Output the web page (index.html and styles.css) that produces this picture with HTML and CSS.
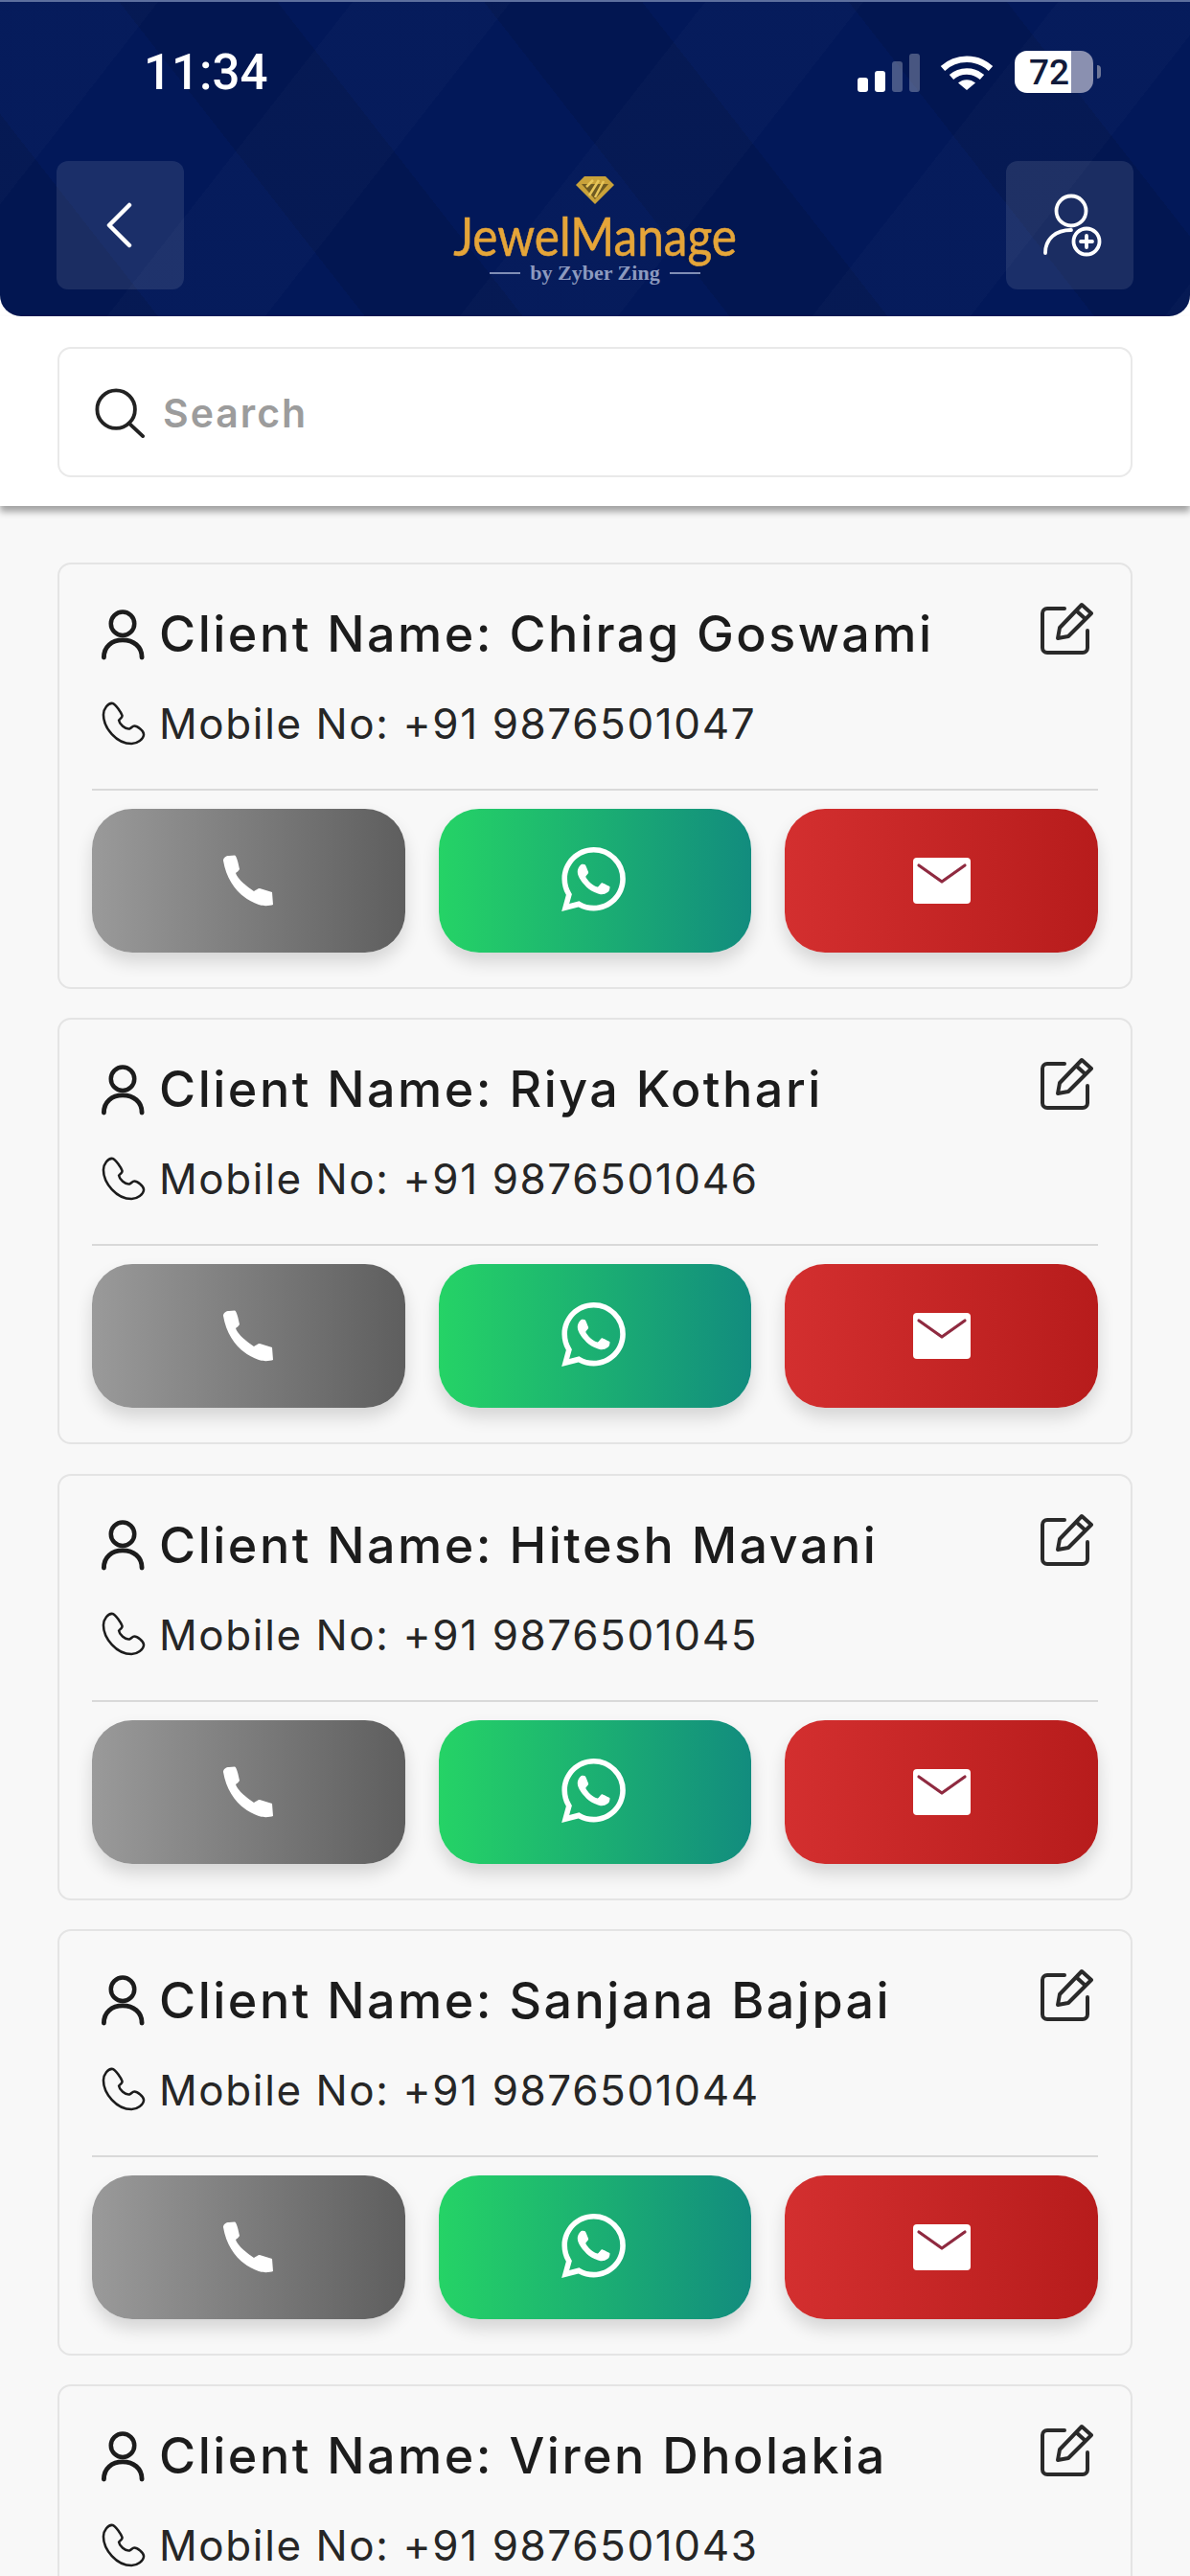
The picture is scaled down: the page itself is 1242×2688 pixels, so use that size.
FILE: index.html
```html
<!DOCTYPE html>
<html lang="en">

<head>
  <meta charset="UTF-8">
  <meta name="viewport" content="width=device-width, initial-scale=1.0">
  <title>JewelManage - Clients</title>
  <link rel="stylesheet" href="styles.css">
</head>

<body>
  <svg class="sprites" aria-hidden="true">
    <symbol id="i-user" viewBox="0 0 48 54">
      <circle cx="23.5" cy="15" r="12.5" fill="none" stroke="currentColor" stroke-width="4.6" />
      <path d="M3.5 51C3.5 39.500 12 32.500 23.500 32.500S44 39.500 44 51" fill="none" stroke="currentColor" stroke-width="5" stroke-linecap="round" />
    </symbol>
    <symbol id="i-handset" viewBox="0 0 48 48">
      <path d="M3 14C3 8 8 1 13 2C16 3 22 12 23 15C23.500 17 20 19 19.500 20C20 24 26 30 31 29C33 28 34 26 36 26C39 26 46 31 46 35C46 40 39 45 33 45C17 45 3 28 3 14Z" fill="none" stroke="currentColor" stroke-width="2.6" stroke-linejoin="round" />
    </symbol>
    <symbol id="i-edit" viewBox="0 0 56 56">
      <path d="M26 7H8A5 5 0 0 0 3 12V48A5 5 0 0 0 8 53H45A5 5 0 0 0 50 48V30" fill="none" stroke="currentColor" stroke-width="4" stroke-linecap="round" />
      <path d="M19 38L21 27L44 3L54 12L30 36Z" fill="none" stroke="currentColor" stroke-width="4" stroke-linejoin="round" />
      <path d="M38 9L48 18" fill="none" stroke="currentColor" stroke-width="4" />
    </symbol>
    <symbol id="i-call" viewBox="0 0 54 54">
      <path d="M1 6C1 3 4 1 7 1L13 .5C15 1 17 10 18 15C17 17 15 18 14 19C16 25 25 33 33 38C35 37 37 35 39 35L52 39L53 52C50 53 44 54 38 52C20 46 5 30 1 6Z" fill="#fff" />
    </symbol>
    <symbol id="i-whatsapp" viewBox="0 0 24 24">
      <path fill="#fff" d="M17.472 14.382c-.297-.149-1.758-.867-2.03-.967-.273-.099-.471-.148-.67.15-.197.297-.767.966-.94 1.164-.173.199-.347.223-.644.075-.297-.15-1.255-.463-2.39-1.475-.883-.788-1.48-1.761-1.653-2.059-.173-.297-.018-.458.13-.606.134-.133.298-.347.446-.52.149-.174.198-.298.298-.497.099-.198.05-.371-.025-.52-.075-.149-.669-1.612-.916-2.207-.242-.579-.487-.5-.669-.51-.173-.008-.371-.01-.57-.01-.198 0-.52.074-.792.372-.272.297-1.04 1.016-1.04 2.479 0 1.462 1.065 2.875 1.213 3.074.149.198 2.096 3.2 5.077 4.487.709.306 1.262.489 1.694.625.712.227 1.36.195 1.871.118.571-.085 1.758-.719 2.006-1.413.248-.694.248-1.289.173-1.413-.074-.124-.272-.198-.57-.347m-5.421 7.403h-.004a9.87 9.87 0 01-5.031-1.378l-.361-.214-3.741.982.998-3.648-.235-.374a9.86 9.86 0 01-1.51-5.26c.001-5.45 4.436-9.884 9.888-9.884 2.64 0 5.122 1.03 6.988 2.898a9.825 9.825 0 012.893 6.994c-.003 5.45-4.437 9.884-9.885 9.884m8.413-18.297A11.815 11.815 0 0012.05 0C5.495 0 .16 5.335.157 11.892c0 2.096.547 4.142 1.588 5.945L.057 24l6.305-1.654a11.882 11.882 0 005.683 1.448h.005c6.554 0 11.89-5.335 11.893-11.893a11.821 11.821 0 00-3.48-8.413z" />
    </symbol>
    <symbol id="i-mail" viewBox="0 0 60 48">
      <rect width="60" height="48" rx="4" fill="#fff" />
      <path d="M6 8L30 25L54 8" fill="none" stroke="#8f2a40" stroke-width="3.2" stroke-linecap="round" stroke-linejoin="round" />
    </symbol>
  </svg>

  <header class="top">
    <div class="status">
      <span class="time">11:34</span>
      <div class="status-icons">
        <span class="signal"><i></i><i></i><i class="off"></i><i class="off"></i></span>
        <svg class="wifi" viewBox="0 0 56 36">
          <path d="M3 13.500C17 .5 39 .5 53 13.500" fill="none" stroke="#fff" stroke-width="6.500" />
          <path d="M12 22.500C21 14.500 35 14.500 44 22.500" fill="none" stroke="#fff" stroke-width="6.500" />
          <path d="M19 28.500C24 24 32 24 37 28.500L28 36Z" fill="#fff" />
        </svg>
        <span class="battery"><b>72</b></span>
        <span class="battery-nub"></span>
      </div>
    </div>
    <nav class="bar">
      <button class="bar-btn" aria-label="Back">
        <svg class="back-icon" width="30" height="50" viewBox="0 0 30 50">
          <path d="M26 4L5 25L26 46" fill="none" stroke="#fff" stroke-width="4.500" stroke-linecap="round" stroke-linejoin="round" />
        </svg>
      </button>
      <div class="logo">
        <svg class="logo-gem" width="40" height="30" viewBox="0 0 40 30">
          <path d="M9 1H31L40 10L20 30L0 10Z" fill="#c9a23a" />
          <path d="M6 9H34L20 25Z" fill="#6e5a22" />
          <path d="M14 21L24 5M20 23L29 6M11 12L18 5" fill="none" stroke="#e8c65a" stroke-width="2.500" />
        </svg>
        <span class="logo-name">JewelManage</span>
        <span class="logo-sub"><i></i>by Zyber Zing<i></i></span>
      </div>
      <button class="bar-btn" aria-label="Add client">
        <svg class="add-icon" width="62" height="66" viewBox="0 0 62 66">
          <circle cx="29" cy="18" r="15.500" fill="none" stroke="#fff" stroke-width="3.800" />
          <path d="M2 62C2 47 13 38 29 38" fill="none" stroke="#fff" stroke-width="3.800" stroke-linecap="round" />
          <circle cx="45" cy="50" r="13.500" fill="none" stroke="#fff" stroke-width="3.800" />
          <path d="M45 44V56M39 50H51" fill="none" stroke="#fff" stroke-width="3.800" stroke-linecap="round" />
        </svg>
      </button>
    </nav>
  </header>

  <section class="search-panel">
    <label class="search">
      <svg width="52" height="52" viewBox="0 0 54 54">
        <circle cx="23" cy="23" r="20.500" fill="none" stroke="#222" stroke-width="4" />
        <path d="M37 38L52 52" fill="none" stroke="#222" stroke-width="4" stroke-linecap="round" />
      </svg>
      <input class="search-input" type="text" placeholder="Search">
    </label>
  </section>

  <main class="list">
    <article class="card">
      <div class="name-row">
        <svg class="row-icon"><use href="#i-user" /></svg>
        <h2 class="name">Client Name: Chirag Goswami</h2>
        <svg class="edit"><use href="#i-edit" /></svg>
      </div>
      <div class="phone-row">
        <svg class="row-icon"><use href="#i-handset" /></svg>
        <span class="phone">Mobile No: +91 9876501047</span>
      </div>
      <div class="actions">
        <a class="action action-call"><svg class="ico-call"><use href="#i-call" /></svg></a>
        <a class="action action-wa"><svg class="ico-wa"><use href="#i-whatsapp" /></svg></a>
        <a class="action action-mail"><svg class="ico-mail"><use href="#i-mail" /></svg></a>
      </div>
    </article>

    <article class="card">
      <div class="name-row">
        <svg class="row-icon"><use href="#i-user" /></svg>
        <h2 class="name">Client Name: Riya Kothari</h2>
        <svg class="edit"><use href="#i-edit" /></svg>
      </div>
      <div class="phone-row">
        <svg class="row-icon"><use href="#i-handset" /></svg>
        <span class="phone">Mobile No: +91 9876501046</span>
      </div>
      <div class="actions">
        <a class="action action-call"><svg class="ico-call"><use href="#i-call" /></svg></a>
        <a class="action action-wa"><svg class="ico-wa"><use href="#i-whatsapp" /></svg></a>
        <a class="action action-mail"><svg class="ico-mail"><use href="#i-mail" /></svg></a>
      </div>
    </article>

    <article class="card">
      <div class="name-row">
        <svg class="row-icon"><use href="#i-user" /></svg>
        <h2 class="name">Client Name: Hitesh Mavani</h2>
        <svg class="edit"><use href="#i-edit" /></svg>
      </div>
      <div class="phone-row">
        <svg class="row-icon"><use href="#i-handset" /></svg>
        <span class="phone">Mobile No: +91 9876501045</span>
      </div>
      <div class="actions">
        <a class="action action-call"><svg class="ico-call"><use href="#i-call" /></svg></a>
        <a class="action action-wa"><svg class="ico-wa"><use href="#i-whatsapp" /></svg></a>
        <a class="action action-mail"><svg class="ico-mail"><use href="#i-mail" /></svg></a>
      </div>
    </article>

    <article class="card">
      <div class="name-row">
        <svg class="row-icon"><use href="#i-user" /></svg>
        <h2 class="name">Client Name: Sanjana Bajpai</h2>
        <svg class="edit"><use href="#i-edit" /></svg>
      </div>
      <div class="phone-row">
        <svg class="row-icon"><use href="#i-handset" /></svg>
        <span class="phone">Mobile No: +91 9876501044</span>
      </div>
      <div class="actions">
        <a class="action action-call"><svg class="ico-call"><use href="#i-call" /></svg></a>
        <a class="action action-wa"><svg class="ico-wa"><use href="#i-whatsapp" /></svg></a>
        <a class="action action-mail"><svg class="ico-mail"><use href="#i-mail" /></svg></a>
      </div>
    </article>

    <article class="card">
      <div class="name-row">
        <svg class="row-icon"><use href="#i-user" /></svg>
        <h2 class="name">Client Name: Viren Dholakia</h2>
        <svg class="edit"><use href="#i-edit" /></svg>
      </div>
      <div class="phone-row">
        <svg class="row-icon"><use href="#i-handset" /></svg>
        <span class="phone">Mobile No: +91 9876501043</span>
      </div>
    </article>
  </main>
</body>

</html>
```

FILE: styles.css
```css
* {
  box-sizing: border-box;
}

html,
body {
  height: 2688px;
  margin: 0;
  overflow: hidden;
}

body {
  display: flex;
  flex-direction: column;
  background: #fff;
  color: #1c1c1c;
  font-family: Inter, "Noto Sans", sans-serif;
}

.sprites {
  display: none;
}

/* header */
.top {
  height: 330px;
  padding: 51px 59px 0;
  flex: none;
  border-top: 2px solid #5d6f9e;
  border-radius: 0 0 22px 22px;
  background-color: #021859;
  background-image:
    repeating-linear-gradient(128deg, rgba(255, 255, 255, .014) 0 130px, transparent 130px 290px),
    repeating-linear-gradient(52deg, rgba(0, 0, 0, .09) 0 130px, transparent 130px 300px);
}

.status {
  height: 44px;
  display: flex;
  align-items: center;
  justify-content: space-between;
  padding: 0 34px 0 91px;
  color: #fff;
}

.time {
  font-size: 51px;
  font-weight: 500;
  font-family: Roboto, Inter, sans-serif;
}

.status-icons {
  display: flex;
  align-items: center;
}

.signal {
  display: flex;
  align-items: flex-end;
  gap: 7px;
  height: 40px;
  margin-top: 2px;
}

.signal i {
  width: 11px;
  border-radius: 3px;
  background: #fff;
}

.signal i:nth-child(1) { height: 15px; }
.signal i:nth-child(2) { height: 22px; }
.signal i:nth-child(3) { height: 32px; }
.signal i:nth-child(4) { height: 40px; }

.signal i.off {
  background: rgba(255, 255, 255, .28);
}

.wifi {
  width: 56px;
  height: 36px;
  margin: 2px 22px 0 21px;
}

.battery {
  width: 82px;
  height: 44px;
  display: flex;
  align-items: center;
  justify-content: center;
  padding-right: 10px;
  border-radius: 13px;
  background: linear-gradient(90deg, #fff 0 72%, #8a90b0 72%);
  color: #111a3a;
  font-family: Roboto, sans-serif;
  font-size: 37px;
}

.battery b {
  font-weight: 500;
}

.battery-nub {
  width: 4px;
  height: 14px;
  margin-left: 4px;
  border-radius: 0 4px 4px 0;
  background: #6d7697;
}

.bar {
  height: 134px;
  margin-top: 71px;
  display: flex;
  align-items: center;
  justify-content: space-between;
}

.bar-btn {
  width: 133px;
  height: 134px;
  display: flex;
  align-items: center;
  justify-content: center;
  padding: 0;
  border: 0;
  border-radius: 12px;
  background: rgba(255, 255, 255, .1);
}

.back-icon {
  margin-right: 3px;
}

.add-icon {
  margin-left: 6px;
}

.logo {
  width: 330px;
  display: flex;
  flex-direction: column;
  align-items: center;
  padding-top: 8px;
}

.logo-gem {
  margin-bottom: 6px;
}

.logo-name {
  color: #e5a539;
  font-family: Lato, sans-serif;
  font-size: 56px;
  line-height: 54px;
  -webkit-text-stroke: .6px #e5a539;
  transform: scaleX(.885);
}

.logo-sub {
  display: flex;
  align-items: center;
  gap: 10px;
  margin-top: 1px;
  color: #8d9abf;
  font-family: "Liberation Serif", serif;
  font-size: 22px;
  font-weight: 700;
  line-height: 22px;
}

.logo-sub i {
  width: 32px;
  height: 2px;
  background: #7f8db5;
}

/* search */
.search-panel {
  position: relative;
  flex: none;
  height: 198px;
  padding: 32px 60px 0;
  background: #fff;
  box-shadow: 0 6px 7px rgba(0, 0, 0, .35);
}

.search {
  height: 136px;
  display: flex;
  align-items: center;
  gap: 19px;
  padding: 2px 0 0 37px;
  border: 2px solid #e9e9e9;
  border-radius: 14px;
}

.search-input {
  flex: 1;
  min-width: 0;
  border: 0;
  outline: 0;
  padding: 0;
  background: transparent;
  font-family: Inter, sans-serif;
  font-size: 41px;
  font-weight: 600;
  letter-spacing: 2px;
}

.search-input::placeholder {
  color: #9c9c9c;
  opacity: 1;
}

/* client cards */
.list {
  flex: 1;
  min-height: 0;
  overflow: hidden;
  display: flex;
  flex-direction: column;
  gap: 30.25px;
  padding: 59px 60px 0;
  background: #f8f8f8;
}

.card {
  flex: none;
  height: 445px;
  padding: 41px 34px 0;
  border: 2px solid #e4e4e4;
  border-radius: 14px;
}

.name-row,
.phone-row {
  display: flex;
  align-items: center;
  gap: 14px;
  padding-left: 9px;
}

.name-row {
  height: 64px;
}

.phone-row {
  height: 99px;
  margin-top: 32px;
  padding-bottom: 39px;
  border-bottom: 2px solid #d9d9d9;
}

.row-icon {
  width: 47px;
  height: 53px;
  flex: none;
  color: #1c1c1c;
}

.name {
  margin: 0;
  font-size: 52px;
  font-weight: 500;
  letter-spacing: 2.5px;
  line-height: 64px;
}

.phone {
  font-size: 44px;
  font-weight: 400;
  letter-spacing: 1.6px;
  color: #262626;
}

.edit {
  width: 56px;
  height: 56px;
  flex: none;
  margin: -12px 5px 0 auto;
  color: #2a2a2a;
}

.actions {
  display: flex;
  gap: 35px;
  margin-top: 19px;
}

.action {
  flex: 1;
  height: 150px;
  display: flex;
  align-items: center;
  justify-content: center;
  border-radius: 42px;
  box-shadow: 0 10px 18px rgba(0, 0, 0, .14);
}

.action-call {
  background: linear-gradient(90deg, #9a9a9a, #5e5e5e);
}

.action-wa {
  background: linear-gradient(90deg, #25d366, #128c7e);
}

.action-mail {
  background: linear-gradient(90deg, #d32f2f, #b71c1c);
}

.ico-call {
  width: 54px;
  height: 54px;
}

.ico-wa {
  width: 67px;
  height: 67px;
  margin: 0 4px 3px 0;
}

.ico-mail {
  width: 60px;
  height: 48px;
}
```
